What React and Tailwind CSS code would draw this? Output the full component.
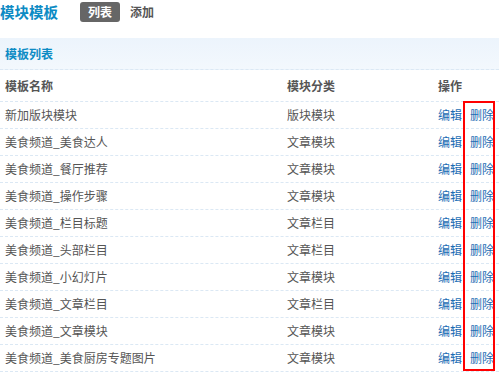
import React from "react";

const rows = [
  ["新加版块模块", "版块模块"],
  ["美食频道_美食达人", "文章模块"],
  ["美食频道_餐厅推荐", "文章模块"],
  ["美食频道_操作步骤", "文章模块"],
  ["美食频道_栏目标题", "文章栏目"],
  ["美食频道_头部栏目", "文章栏目"],
  ["美食频道_小幻灯片", "文章模块"],
  ["美食频道_文章栏目", "文章栏目"],
  ["美食频道_文章模块", "文章模块"],
  ["美食频道_美食厨房专题图片", "文章模块"],
];

export default function App() {
  return (
    <div
      className="relative w-[499px] h-[375px] bg-white overflow-hidden text-[12px] text-[#555]"
      style={{ fontFamily: '"Noto Sans CJK SC", "Liberation Sans", sans-serif' }}
    >
      <div className="flex items-center h-[24px]">
        <div className="text-[14.5px] font-bold text-[#0c8bc4] leading-none w-[80px]">模块模板</div>
        <div className="h-[20px] px-[8px] rounded-[3px] bg-[#666] text-white font-bold flex items-center leading-none">列表</div>
        <div className="ml-[10px] font-bold text-[#555] leading-none">添加</div>
      </div>
      <div className="mt-[14px] h-[32px] bg-gradient-to-b from-[#ecf4fc] to-[#f3f8fd] border-b border-dashed border-[#dbe8f4] flex items-center pl-[5px]">
        <span className="font-bold text-[#0c8bc4] leading-none">模板列表</span>
      </div>
      <div className="flex items-center h-[32px] border-b border-dashed border-[#dbe8f4] font-bold text-[#555]">
        <div className="w-[287px] pl-[5px]">模板名称</div>
        <div className="w-[151px]">模块分类</div>
        <div>操作</div>
      </div>
      {rows.map(([n, c], i) => (
        <div key={i} className="flex items-center h-[27px] border-b border-dashed border-[#dbe8f4]">
          <div className="w-[287px] pl-[5px]">{n}</div>
          <div className="w-[151px]">{c}</div>
          <div className="flex gap-[8px] text-[#1c6db4]">
            <span>编辑</span>
            <span>删除</span>
          </div>
        </div>
      ))}
      <div className="absolute left-[463px] top-[101px] w-[32px] h-[270px] border-2 border-[#ff0000] pointer-events-none" />
    </div>
  );
}
